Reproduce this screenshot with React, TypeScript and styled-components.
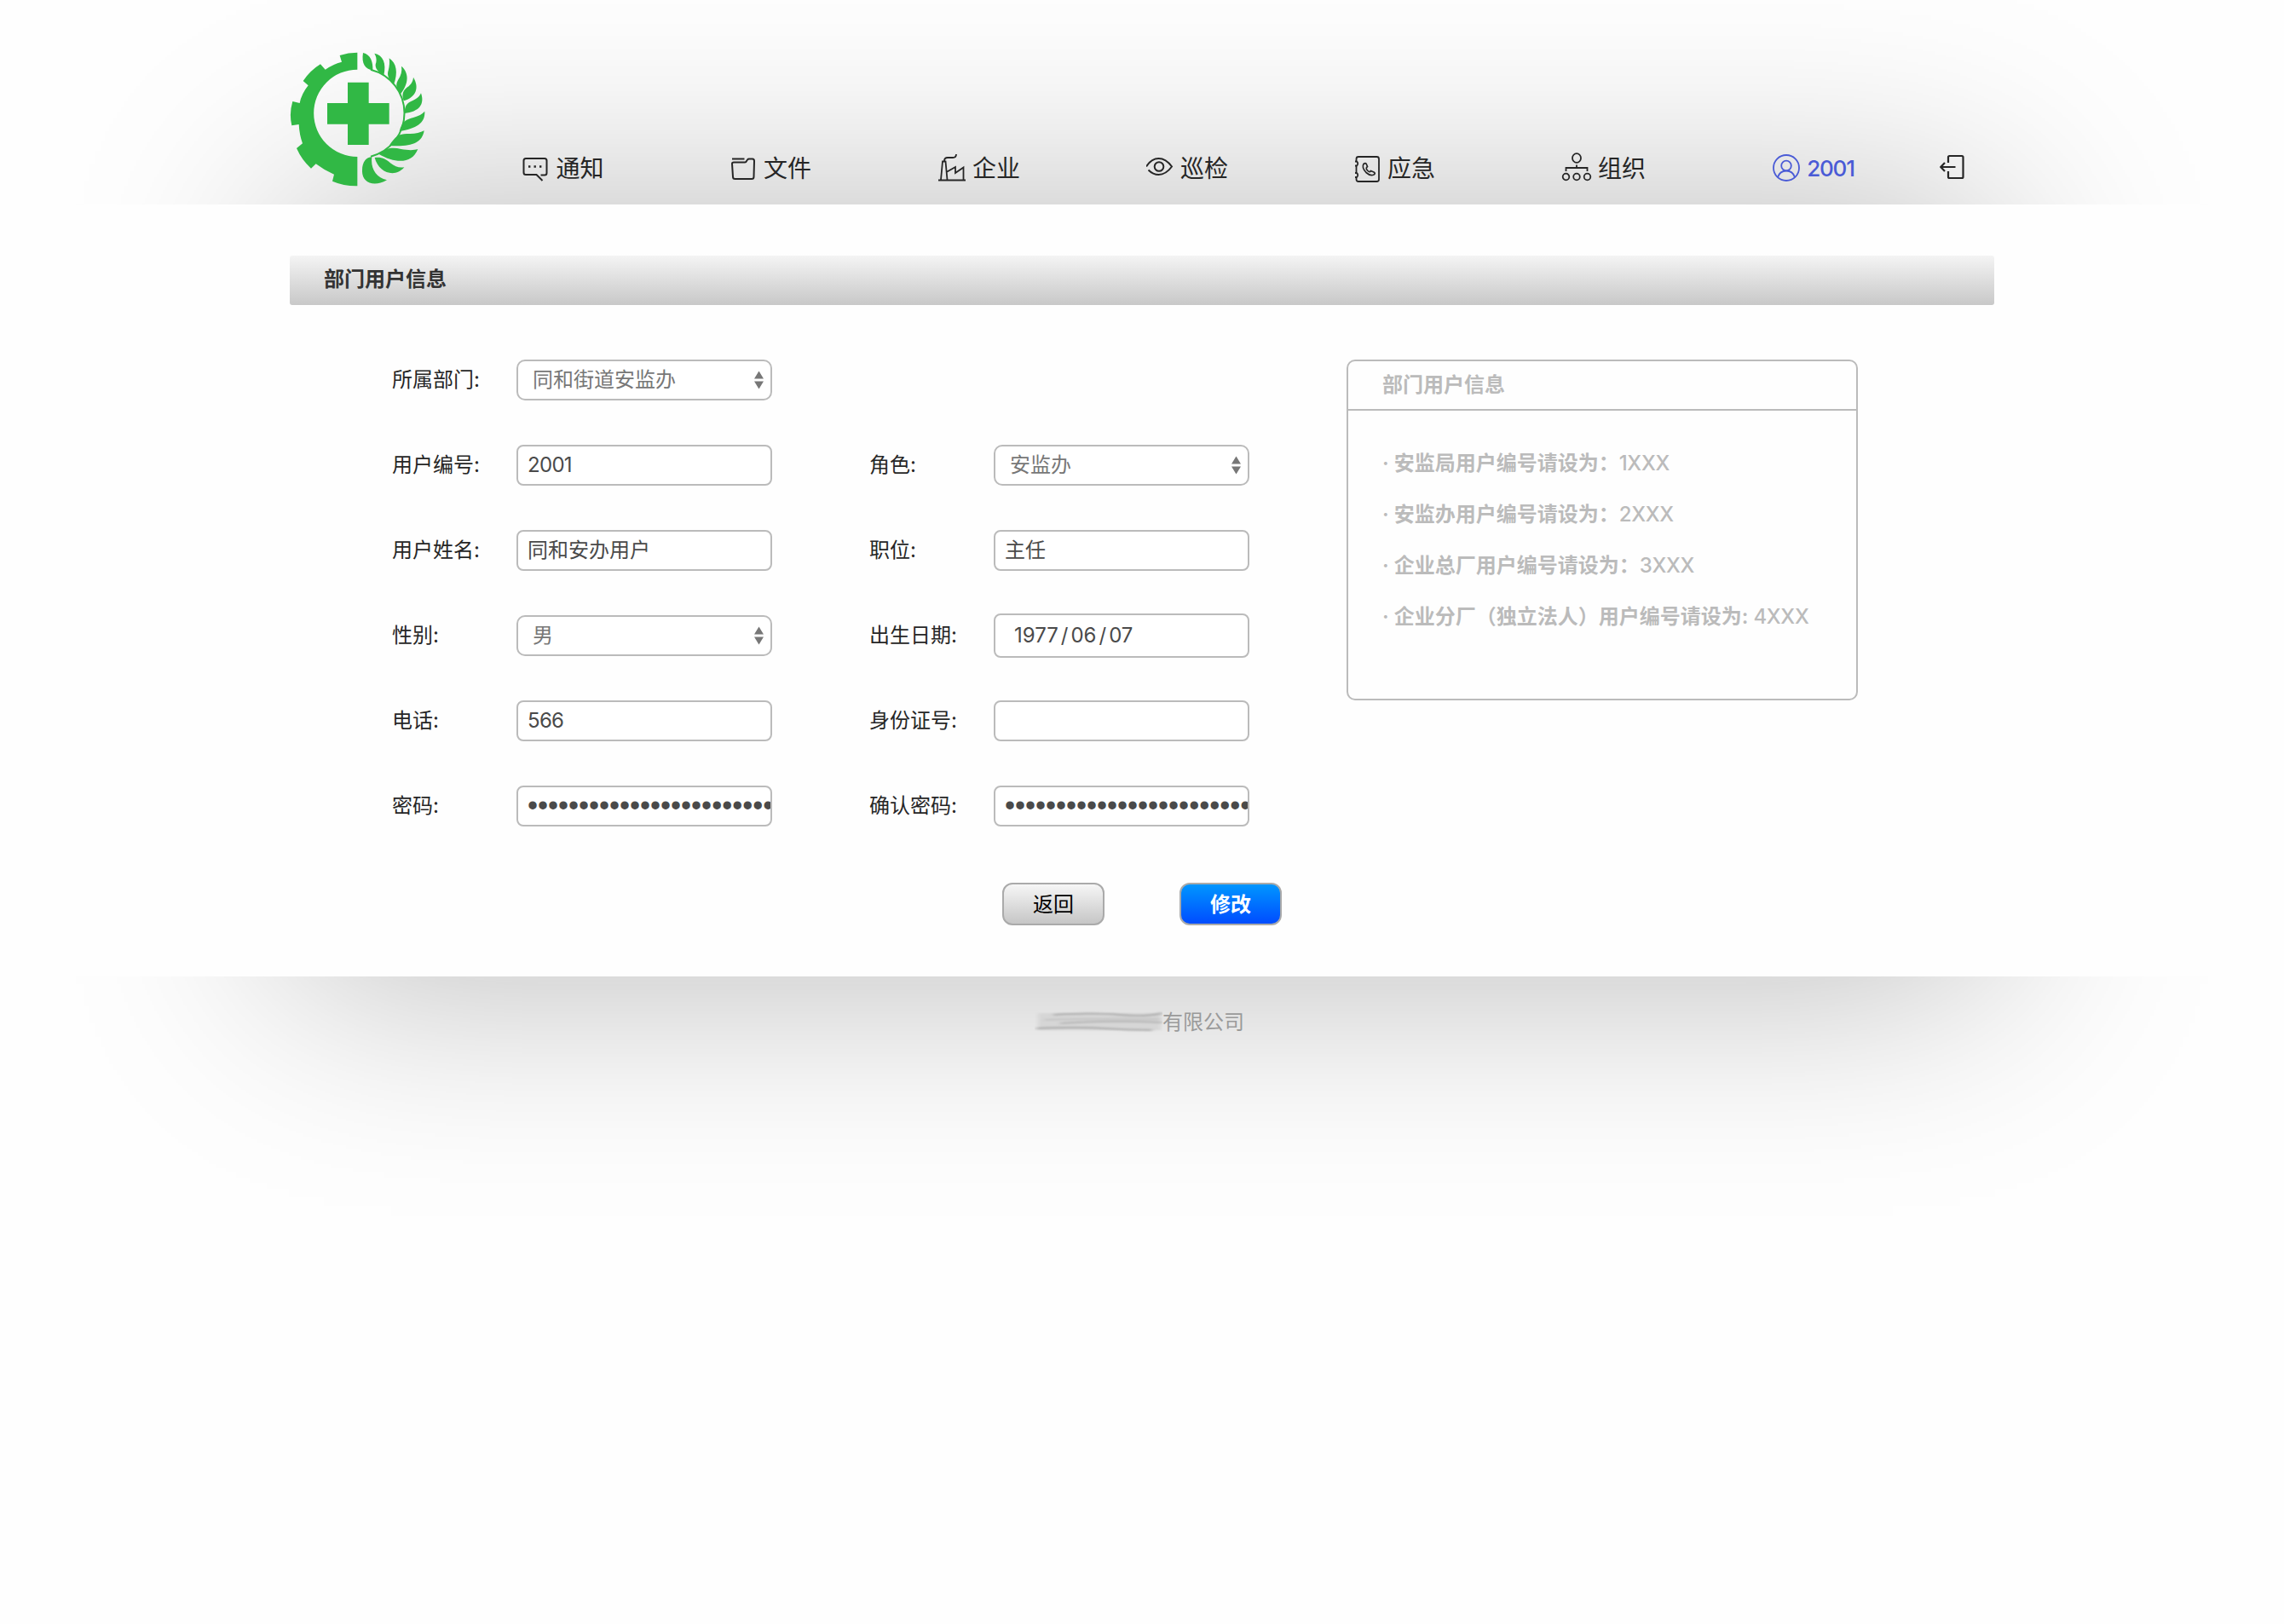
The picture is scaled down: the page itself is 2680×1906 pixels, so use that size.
import React from 'react';
import styled, { createGlobalStyle, css } from 'styled-components';

const GlobalStyle = createGlobalStyle`
  * { box-sizing: border-box; }
  body {
    margin: 0;
    background: #fefefe;
    color: #262626;
    font-family: Inter, "Noto Sans CJK SC", sans-serif;
    font-size: 24px;
    line-height: 36px;
  }
`;

const Page = styled.div`
  display: flex;
  flex-direction: column;
  min-height: 1906px;
`;

/* A soft grey halo that shows only inside its own band of the page. */
const halo = css`
  content: '';
  position: absolute;
  left: 340px;
  right: 340px;
  height: 1000px;
  pointer-events: none;
`;

const Header = styled.header`
  position: relative;
  overflow: hidden;
  height: 240px;
  padding: 60px 340px 0;
  display: flex;
  align-items: flex-start;
  &::before {
    ${halo}
    top: 1740px;
    box-shadow: 0 -1500px 240px #bbb;
  }
`;

const Logo = styled.svg`
  position: relative;
  flex: none;
  width: 160px;
  height: 160px;
`;

const Nav = styled.nav`
  position: relative;
  display: flex;
  margin: 118px 0 0 39px;
`;

const NavItem = styled.a<{ $width?: number; $active?: boolean }>`
  flex: none;
  width: ${(p) => p.$width ?? 244}px;
  height: 40px;
  display: flex;
  align-items: center;
  justify-content: center;
  font-size: 28px;
  line-height: 40px;
  white-space: nowrap;
  color: ${(p) => (p.$active ? '#4a5bd6' : '#262626')};
  font-weight: ${(p) => (p.$active ? 500 : 400)};
`;

const UserName = styled.span`
  font-size: 26px;
  letter-spacing: -1.2px;
`;

const NavIcon = styled.svg`
  flex: none;
  height: 40px;
  fill: none;
  stroke: currentColor;
  stroke-width: 2;
`;

const Main = styled.main`
  width: 2000px;
  height: 906px;
  margin: 0 auto;
  padding-top: 60px;
`;

const TitleBar = styled.h1`
  margin: 0;
  height: 58px;
  padding: 0 40px 2px;
  display: flex;
  align-items: center;
  border-radius: 3px;
  background: linear-gradient(#f4f4f4, #c8c8c8);
  color: #333;
  font-size: 24px;
  font-weight: 600;
`;

const Content = styled.div`
  display: grid;
  grid-template-columns: 1120px 600px;
  padding: 38px 0 0 120px;
  align-items: start;
`;

const Form = styled.form`
  display: grid;
  grid-template-columns: 560px 560px;
  grid-auto-rows: 100px;
`;

const Field = styled.div<{ $wide?: boolean }>`
  grid-column: ${(p) => (p.$wide ? 'span 2' : 'auto')};
  display: flex;
  align-items: center;
`;

const Label = styled.label`
  width: 146px;
  flex: none;
`;

const Control = styled.div<{ $kind: string }>`
  width: 300px;
  height: ${(p) => (p.$kind === 'date' ? 52 : 48)}px;
  display: flex;
  align-items: center;
  justify-content: space-between;
  overflow: hidden;
  white-space: nowrap;
  border: 2px solid #bbb;
  border-radius: ${(p) => (p.$kind === 'select' ? 10 : 8)}px;
  background: #fff;
  color: ${(p) => (p.$kind === 'select' ? '#777' : '#4a4a4a')};
  padding: 0 8px 0 ${(p) => (p.$kind === 'select' ? 17 : p.$kind === 'date' ? 22 : 11)}px;
`;

const Bullets = styled.span`
  padding-bottom: 2px;
  font: 34.3px/40px "Liberation Sans", sans-serif;
`;

const PlainValue = styled.span<{ $numeric: boolean }>`
  letter-spacing: ${(p) => (p.$numeric ? '-0.7px' : 'normal')};
`;

const Slash = styled.span`
  padding: 0 3px;
`;

const Arrows = styled.svg`
  width: 11px;
  height: 22px;
  fill: #777;
`;

const Panel = styled.aside`
  margin-top: 26px;
  height: 400px;
  border: 2px solid #bbb;
  border-radius: 10px;
  color: #bbb;
  font-weight: 600;
`;

const PanelTitle = styled.h2`
  margin: 0;
  height: 58px;
  padding: 0 40px;
  display: flex;
  align-items: center;
  border-bottom: 2px solid #bbb;
  font-size: 24px;
  font-weight: 600;
`;

const Hints = styled.ul`
  margin: 0;
  padding: 32px 0 0 40px;
  list-style: none;
`;

const Hint = styled.li`
  height: 60px;
  line-height: 60px;
  white-space: nowrap;
`;

const Code = styled.span`
  font-weight: 500;
  letter-spacing: -0.3px;
`;

const Actions = styled.div`
  display: flex;
  justify-content: center;
  gap: 88px;
  padding-top: 40px;
`;

const Button = styled.button<{ $primary?: boolean }>`
  width: 120px;
  height: 50px;
  padding: 1px 0 0;
  border: 2px solid #aaa;
  border-radius: 12px;
  font: inherit;
  font-weight: ${(p) => (p.$primary ? 600 : 400)};
  color: ${(p) => (p.$primary ? '#fff' : '#000')};
  background: ${(p) =>
    p.$primary ? 'linear-gradient(#0096ff, #004cff)' : 'linear-gradient(#f6f6f6, #c6c6c6)'};
`;

const Footer = styled.footer`
  position: relative;
  overflow: hidden;
  height: 400px;
  display: flex;
  justify-content: center;
  align-items: flex-start;
  padding-top: 36px;
  color: #9a9a9a;
  &::before {
    ${halo}
    top: -2492px;
    box-shadow: 0 1500px 240px #bbb;
  }
`;

const Company = styled.div`
  position: relative;
  display: flex;
  align-items: center;
  padding-right: 6px;
`;

const Smudge = styled.svg`
  width: 150px;
  height: 36px;
`;

const icons: Record<string, { width: number; art: React.ReactNode }> = {
  chat: {
    width: 39,
    art: (
      <>
        <path d="M21.500 27.500 H26 Q28.500 27.500 28.500 25 V10.500 Q28.500 8 26 8 H4 Q1.500 8 1.500 10.500 V24.500 Q1.500 27 4 27 H16.500 L23.500 34" />
        <path d="M7 17.500h2.400M13.500 17.500h2.400M20 17.500h2.400" strokeWidth="2.400" />
      </>
    ),
  },
  folder: {
    width: 38,
    art: (
      <>
        <path d="M1 14 Q1 12.500 3 12.500 H16 Q17.500 12.500 18 11 L19 9.500 Q19.600 8.500 21 8.500 H25 Q27 8.500 27 11 L26.500 29.500 Q26.500 32 24 32 H4.500 Q2 32 2 29.500 Z" />
        <path d="M1 8.500H15.500" />
      </>
    ),
  },
  factory: {
    width: 40,
    art: (
      <path
        strokeWidth="1.800"
        d="M0 33.500H32 M3 33 L5 11.500 H8.500 L10.500 33 M7 11 Q7 7 11 7 H17 Q21 7 21 3 M9.500 24 L20 18 V25 L29.500 18.500 V33"
      />
    ),
  },
  eye: {
    width: 40,
    art: (
      <g transform="translate(-1 0)">
        <path d="M1 17.500 Q7 8 15.500 8 Q24 8 31 17.500 Q24 27 15.500 27 Q9 27 3.500 21.500" />
        <circle cx="16" cy="17.500" r="5.300" />
      </g>
    ),
  },
  phonebook: {
    width: 38,
    art: (
      <>
        <path
          strokeWidth="1.800"
          d="M1.500 11 V8.500 Q1.500 6 4 6 H25.500 Q28 6 28 8.500 V32.500 Q28 35 25.500 35 H4 Q1.500 35 1.500 32.500 V30 M1.500 17 V24.500 M0 11.500 H2 Q4.500 14 2 16.500 H0 M0 25 H2 Q4.500 27.500 2 30 H0"
        />
        <path
          strokeWidth="1.700"
          d="M10 14.500 Q12.500 12.500 13.500 15 L14.500 17.500 Q12 19.500 14.500 22 Q17 25 18.500 22.500 L22 24 Q24.500 25.500 22 27 Q18 29 13 24.500 Q7.500 18.500 10 14.500Z"
        />
      </>
    ),
  },
  org: {
    width: 44,
    art: (
      <g strokeWidth="1.800" transform="translate(1.500 0)">
        <ellipse cx="17.500" cy="7.500" rx="5" ry="5.300" />
        <path d="M17.500 15.500V19 M5 23V19H30V23" />
        <circle cx="5" cy="29.500" r="3.800" />
        <circle cx="17.500" cy="29.500" r="3.800" />
        <circle cx="30" cy="29.500" r="3.800" />
      </g>
    ),
  },
  user: {
    width: 40,
    art: (
      <g strokeWidth="1.800">
        <circle cx="16" cy="19" r="15" />
        <circle cx="16" cy="16.500" r="5.800" />
        <path d="M6 30 Q8.500 22.500 16 22.500 Q23.500 22.500 26 30" />
      </g>
    ),
  },
  exit: {
    width: 30,
    art: (
      <path
        strokeWidth="2.200"
        d="M10 13V6.500Q10 5 11.500 5H26Q27.500 5 27.500 6.500V29.500Q27.500 31 26 31H11.500Q10 31 10 29.500V23 M18.500 18H1.500 M6 13L1.200 18L6 23"
      />
    ),
  },
};

const Icon = ({ name }: { name: string }) => (
  <NavIcon width={icons[name].width} viewBox={`0 0 ${icons[name].width} 40`}>
    {icons[name].art}
  </NavIcon>
);

const SafetyLogo = () => (
  <Logo viewBox="60 60 480 480" fill="#31b845">
    <path d="M298 65 Q266 65 236 75 L243 98 Q212 106 185 125 L168 106 Q132 128 107 165 L125 181 Q101 211 95 243 L70 237 Q57 280 67 322 L92 318 Q94 355 105 385 L84 402 Q102 443 135 473 L152 457 Q182 480 216 494 L210 518 Q252 536 298 535 V432 A153.500 153.500 0 0 1 298 125 Z" />
    <path d="M264 170h74v73h72v74h-72v73h-74v-73h-72v-74h72z" />
    <path d="M345 125 A158 158 0 0 1 345 431" fill="none" stroke="#31b845" strokeWidth="6" />
    <path d="M318 66 C345 72 353 98 352 127 C325 124 312 104 318 66Z" />
    <path d="M358 68 C388 74 401 102 391 145 C364 130 358 114 364 100 C366 88 364 78 358 68Z" />
    <path d="M410 85 C436 102 442 136 426 178 C406 158 402 142 407 128 C411 114 412 98 410 85Z" />
    <path d="M453 113 C482 138 478 176 450 211 C436 192 431 180 441 162 C452 146 456 130 453 113Z" />
    <path d="M495 152 C516 186 507 222 461 235 C453 212 459 198 474 187 C488 177 494 166 495 152Z" />
    <path d="M522 208 C536 248 515 274 464 279 C464 250 475 241 493 234 C510 227 517 219 522 208Z" />
    <path d="M535 272 C537 315 505 332 446 342 C455 306 472 300 495 294 C514 288 526 282 535 272Z" />
    <path d="M533 340 C526 386 484 398 410 393 C432 359 446 350 476 351 C500 352 518 348 533 340Z" />
    <path d="M511 405 C490 458 432 456 374 423 C400 398 424 399 452 405 C476 409 494 410 511 405Z" />
    <path d="M463 469 C430 508 372 488 359 435 C384 432 398 440 414 454 C430 467 446 472 463 469Z" />
    <path d="M402 514 C352 542 313 520 315 480 C315 450 330 433 349 433 C344 474 364 504 402 514Z" />
  </Logo>
);

const navItems = [
  ['chat', '通知'],
  ['folder', '文件'],
  ['factory', '企业'],
  ['eye', '巡检'],
  ['phonebook', '应急'],
  ['org', '组织'],
];

type FieldData = { label: string; kind: 'select' | 'text' | 'date' | 'password'; value: string };

const fields: FieldData[] = [
  { label: '所属部门', kind: 'select', value: '同和街道安监办' },
  { label: '用户编号', kind: 'text', value: '2001' },
  { label: '角色', kind: 'select', value: '安监办' },
  { label: '用户姓名', kind: 'text', value: '同和安办用户' },
  { label: '职位', kind: 'text', value: '主任' },
  { label: '性别', kind: 'select', value: '男' },
  { label: '出生日期', kind: 'date', value: '1977/06/07' },
  { label: '电话', kind: 'text', value: '566' },
  { label: '身份证号', kind: 'text', value: '' },
  { label: '密码', kind: 'password', value: '•'.repeat(24) },
  { label: '确认密码', kind: 'password', value: '•'.repeat(24) },
];

const hints = [
  ['· 安监局用户编号请设为：', '1XXX'],
  ['· 安监办用户编号请设为：', '2XXX'],
  ['· 企业总厂用户编号请设为：', '3XXX'],
  ['· 企业分厂（独立法人）用户编号请设为: ', '4XXX'],
];

const Value = ({ kind, value }: FieldData) => {
  if (kind === 'password') return <Bullets>{value}</Bullets>;
  if (kind === 'date') {
    return (
      <span>
        {value.split('/').map((part, i) => (
          <React.Fragment key={i}>
            {i > 0 && <Slash>/</Slash>}
            {part}
          </React.Fragment>
        ))}
      </span>
    );
  }
  return <PlainValue $numeric={/^\d+$/.test(value)}>{value}</PlainValue>;
};

export default function App() {
  return (
    <Page>
      <GlobalStyle />
      <Header>
        <SafetyLogo />
        <Nav>
          {navItems.map(([icon, text]) => (
            <NavItem key={icon}>
              <Icon name={icon} />
              {text}
            </NavItem>
          ))}
          <NavItem $active $width={250}>
            <Icon name="user" />
            <UserName>2001</UserName>
          </NavItem>
          <NavItem $width={76}>
            <Icon name="exit" />
          </NavItem>
        </Nav>
      </Header>
      <Main>
        <TitleBar>部门用户信息</TitleBar>
        <Content>
          <Form>
            {fields.map((f, i) => (
              <Field key={f.label} $wide={i === 0}>
                <Label>{f.label}:</Label>
                <Control $kind={f.kind}>
                  <Value {...f} />
                  {f.kind === 'select' && (
                    <Arrows viewBox="0 0 11 22">
                      <path d="M5.500 0.500L11 9.500H0zM5.500 21.500L11 12.500H0z" />
                    </Arrows>
                  )}
                </Control>
              </Field>
            ))}
          </Form>
          <Panel>
            <PanelTitle>部门用户信息</PanelTitle>
            <Hints>
              {hints.map(([text, code]) => (
                <Hint key={code}>
                  {text}
                  <Code>{code}</Code>
                </Hint>
              ))}
            </Hints>
          </Panel>
        </Content>
        <Actions>
          <Button type="button">返回</Button>
          <Button type="button" $primary>
            修改
          </Button>
        </Actions>
      </Main>
      <Footer>
        <Company>
          <Smudge viewBox="0 0 150 36">
            <defs>
              <filter id="smear" x="-10%" y="-20%" width="120%" height="140%">
                <feGaussianBlur stdDeviation="2.5 0.9" />
              </filter>
            </defs>
            <g filter="url(#smear)" fill="none" stroke="#aaa">
              <rect x="4" y="7" width="144" height="20" fill="#d6d6d6" stroke="none" />
              <path d="M22 9 Q70 6 100 9 T150 7" strokeWidth="2" />
              <path d="M12 15 Q60 13 148 14" stroke="#c4c4c4" strokeWidth="2" />
              <path d="M30 19 Q90 15 150 18" stroke="#b4b4b4" strokeWidth="2" />
              <path d="M2 25 Q50 23 80 25 T138 27" strokeWidth="2" />
            </g>
          </Smudge>
          有限公司
        </Company>
      </Footer>
    </Page>
  );
}
